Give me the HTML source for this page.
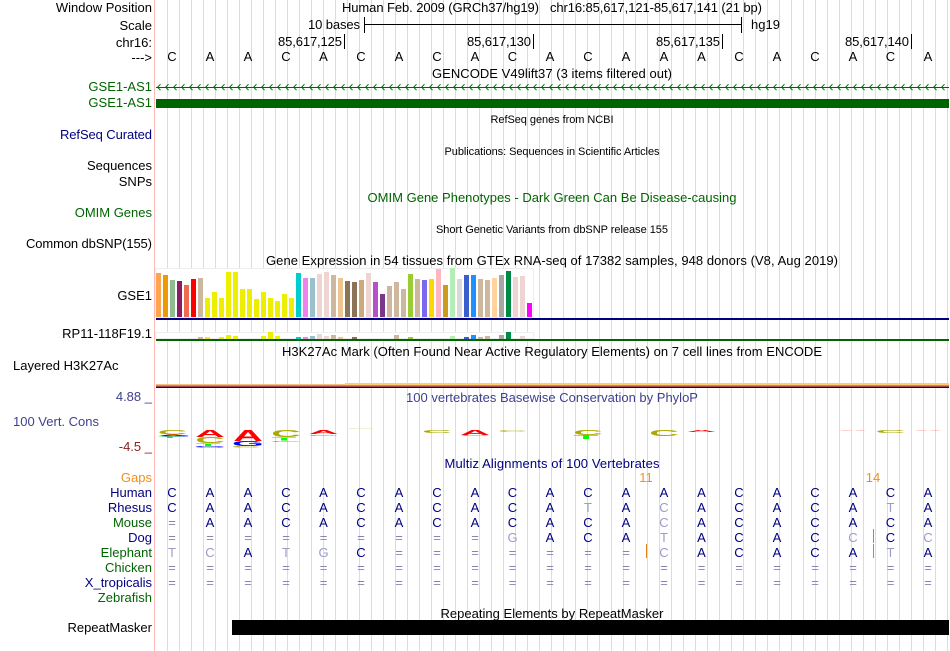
<!DOCTYPE html>
<html>
<head>
<meta charset="utf-8">
<title>Genome Browser</title>
<style>
html,body{margin:0;padding:0;background:#fff;width:950px;height:651px;overflow:hidden}
#gridbg{position:absolute;left:167px;top:0;width:783px;height:651px;background-image:linear-gradient(to right,#d9d9f5 1px,transparent 1px);background-size:12px 100%;background-repeat:repeat-x}
svg{display:block;position:absolute;left:0;top:0}
text{font-family:"Liberation Sans",sans-serif;font-size:13px;fill:#000}
.r{text-anchor:end}
.c{text-anchor:middle}
.s{font-size:11px}
.g{fill:#006400}
.n{fill:#000080}
.d{fill:#000080;text-anchor:middle}
.l{fill:#9c9cc8;text-anchor:middle}
.e{fill:#8484b8;text-anchor:middle}
.lg{font-weight:bold;font-size:41px;text-anchor:middle}
.A{fill:#ff0000}.C{fill:#aaaa00}.G{fill:#0000ff}.T{fill:#00ff00}
rect{shape-rendering:crispEdges}
</style>
</head>
<body>
<div id="gridbg"></div>
<svg width="950" height="651" viewBox="0 0 950 651" xmlns="http://www.w3.org/2000/svg">
<defs>
<pattern id="arr" patternUnits="userSpaceOnUse" x="157" y="83" width="8" height="9"><path d="M3.5 1.2L0.6 4.2L3.5 7.2" fill="none" stroke="#006400" stroke-width="1"/></pattern>
</defs>
<rect x="154" y="0" width="1" height="651" fill="#ffb8b8"/>

<!-- labels -->
<text class="r" x="152" y="12">Window Position</text>
<text class="r" x="152" y="30">Scale</text>
<text class="r" x="152" y="47">chr16:</text>
<text class="r" x="152" y="62">---&gt;</text>
<text class="r g" x="152" y="91">GSE1-AS1</text>
<text class="r g" x="152" y="107">GSE1-AS1</text>
<text class="r n" x="152" y="139" textLength="92">RefSeq Curated</text>
<text class="r" x="152" y="170">Sequences</text>
<text class="r" x="152" y="186">SNPs</text>
<text class="r g" x="152" y="217">OMIM Genes</text>
<text class="r" x="152" y="248" textLength="126">Common dbSNP(155)</text>
<text class="r" x="152" y="300">GSE1</text>
<text class="r" x="152" y="338">RP11-118F19.1</text>
<text x="13" y="370">Layered H3K27Ac</text>
<text class="r" x="152" y="401" style="fill:#40408f">4.88 _</text>
<text x="13" y="426" style="fill:#40408f">100 Vert. Cons</text>
<text class="r" x="152" y="451" style="fill:#8b2222">-4.5 _</text>
<text class="r" x="152" y="482" style="fill:#ee9020">Gaps</text>
<text class="r n" x="152" y="497">Human</text>
<text class="r n" x="152" y="512">Rhesus</text>
<text class="r g" x="152" y="527">Mouse</text>
<text class="r n" x="152" y="542">Dog</text>
<text class="r g" x="152" y="557">Elephant</text>
<text class="r g" x="152" y="572">Chicken</text>
<text class="r n" x="152" y="587">X_tropicalis</text>
<text class="r g" x="152" y="602">Zebrafish</text>
<text class="r" x="152" y="632">RepeatMasker</text>

<!-- header -->
<text x="342" y="12" textLength="197">Human Feb. 2009 (GRCh37/hg19)</text>
<text x="550" y="12" textLength="212">chr16:85,617,121-85,617,141 (21 bp)</text>
<text class="r" x="360" y="29" textLength="52">10 bases</text>
<text x="751" y="29">hg19</text>
<rect x="364" y="17" width="1" height="16" fill="#000"/>
<rect x="741" y="17" width="1" height="16" fill="#000"/>
<rect x="364" y="24" width="378" height="1" fill="#000"/>
<text class="r" x="342" y="46" textLength="64">85,617,125</text>
<text class="r" x="531" y="46" textLength="64">85,617,130</text>
<text class="r" x="720" y="46" textLength="64">85,617,135</text>
<text class="r" x="909" y="46" textLength="64">85,617,140</text>
<rect x="344" y="34" width="1" height="15" fill="#000"/>
<rect x="533" y="34" width="1" height="15" fill="#000"/>
<rect x="722" y="34" width="1" height="15" fill="#000"/>
<rect x="911" y="34" width="1" height="15" fill="#000"/>
<text class="c" x="0" y="61"><tspan x="172">C</tspan><tspan x="210">A</tspan><tspan x="248">A</tspan><tspan x="286">C</tspan><tspan x="323.5">A</tspan><tspan x="361">C</tspan><tspan x="399">A</tspan><tspan x="437">C</tspan><tspan x="475">A</tspan><tspan x="512.5">C</tspan><tspan x="550">A</tspan><tspan x="588">C</tspan><tspan x="626">A</tspan><tspan x="664">A</tspan><tspan x="701.5">A</tspan><tspan x="739">C</tspan><tspan x="777">A</tspan><tspan x="815">C</tspan><tspan x="853">A</tspan><tspan x="890.5">C</tspan><tspan x="928">A</tspan></text>

<!-- gene tracks -->
<text class="c" x="552" y="78" textLength="240">GENCODE V49lift37 (3 items filtered out)</text>
<rect x="156" y="87" width="793" height="1" fill="#006400"/>
<rect x="157" y="83" width="792" height="9" fill="url(#arr)"/>
<rect x="156" y="99" width="793" height="9" fill="#006400"/>
<text class="c s" x="552" y="123" textLength="123">RefSeq genes from NCBI</text>
<text class="c s" x="552" y="155" textLength="215">Publications: Sequences in Scientific Articles</text>
<text class="c g" x="552" y="202" textLength="369">OMIM Gene Phenotypes - Dark Green Can Be Disease-causing</text>
<text class="c s" x="552" y="233" textLength="232">Short Genetic Variants from dbSNP release 155</text>
<text class="c" x="552" y="265" textLength="572">Gene Expression in 54 tissues from GTEx RNA-seq of 17382 samples, 948 donors (V8, Aug 2019)</text>

<!-- GTEx GSE1 -->
<rect x="155.5" y="268.5" width="378" height="49" fill="#fff" stroke="#eeeeee"/>
<rect x="156" y="273" width="5" height="44" fill="#FFA54F"/>
<rect x="163" y="275" width="5" height="42" fill="#EE9A00"/>
<rect x="170" y="280" width="5" height="37" fill="#8FBC8F"/>
<rect x="177" y="281" width="5" height="36" fill="#8B1C62"/>
<rect x="184" y="285" width="5" height="32" fill="#EE6A50"/>
<rect x="191" y="279" width="5" height="38" fill="#FF0000"/>
<rect x="198" y="278" width="5" height="39" fill="#CDB79E"/>
<rect x="205" y="298" width="5" height="19" fill="#EEEE00"/>
<rect x="212" y="292" width="5" height="25" fill="#EEEE00"/>
<rect x="219" y="298" width="5" height="19" fill="#EEEE00"/>
<rect x="226" y="272" width="5" height="45" fill="#EEEE00"/>
<rect x="233" y="272" width="5" height="45" fill="#EEEE00"/>
<rect x="240" y="289" width="5" height="28" fill="#EEEE00"/>
<rect x="247" y="289" width="5" height="28" fill="#EEEE00"/>
<rect x="254" y="299" width="5" height="18" fill="#EEEE00"/>
<rect x="261" y="292" width="5" height="25" fill="#EEEE00"/>
<rect x="268" y="298" width="5" height="19" fill="#EEEE00"/>
<rect x="275" y="301" width="5" height="16" fill="#EEEE00"/>
<rect x="282" y="294" width="5" height="23" fill="#EEEE00"/>
<rect x="289" y="298" width="5" height="19" fill="#EEEE00"/>
<rect x="296" y="273" width="5" height="44" fill="#00CDCD"/>
<rect x="303" y="278" width="5" height="39" fill="#EE82EE"/>
<rect x="310" y="278" width="5" height="39" fill="#9AC0CD"/>
<rect x="317" y="274" width="5" height="43" fill="#EED5D2"/>
<rect x="324" y="272" width="5" height="45" fill="#EED5D2"/>
<rect x="331" y="275" width="5" height="42" fill="#CDB79E"/>
<rect x="338" y="278" width="5" height="39" fill="#EEC591"/>
<rect x="345" y="281" width="5" height="36" fill="#8B7355"/>
<rect x="352" y="282" width="5" height="35" fill="#8B7355"/>
<rect x="359" y="280" width="5" height="37" fill="#CDAA7D"/>
<rect x="366" y="273" width="5" height="44" fill="#EED5D2"/>
<rect x="373" y="282" width="5" height="35" fill="#B452CD"/>
<rect x="380" y="294" width="5" height="23" fill="#7A378B"/>
<rect x="387" y="286" width="5" height="31" fill="#CDB79E"/>
<rect x="394" y="282" width="5" height="35" fill="#CDB79E"/>
<rect x="401" y="289" width="5" height="28" fill="#CDB79E"/>
<rect x="408" y="274" width="5" height="43" fill="#9ACD32"/>
<rect x="415" y="279" width="5" height="38" fill="#CDB79E"/>
<rect x="422" y="280" width="5" height="37" fill="#7B68EE"/>
<rect x="429" y="279" width="5" height="38" fill="#FFD700"/>
<rect x="436" y="269" width="5" height="48" fill="#FFB6C1"/>
<rect x="443" y="285" width="5" height="32" fill="#CD9B1D"/>
<rect x="450" y="268" width="5" height="49" fill="#B4EEB4"/>
<rect x="457" y="279" width="5" height="38" fill="#D9D9D9"/>
<rect x="464" y="275" width="5" height="42" fill="#3A5FCD"/>
<rect x="471" y="275" width="5" height="42" fill="#1E90FF"/>
<rect x="478" y="279" width="5" height="38" fill="#CDB79E"/>
<rect x="485" y="280" width="5" height="37" fill="#CDB79E"/>
<rect x="492" y="278" width="5" height="39" fill="#FFD39B"/>
<rect x="499" y="275" width="5" height="42" fill="#A6A6A6"/>
<rect x="506" y="271" width="5" height="46" fill="#008B45"/>
<rect x="513" y="277" width="5" height="40" fill="#EED5D2"/>
<rect x="520" y="276" width="5" height="41" fill="#EED5D2"/>
<rect x="527" y="303" width="5" height="14" fill="#FF00FF"/>
<rect x="156" y="318" width="793" height="2" fill="#000080"/>

<!-- GTEx RP11 -->
<rect x="155.5" y="332.5" width="378" height="6" fill="#fff" stroke="#eeeeee"/>
<rect x="198" y="337" width="5" height="2" fill="#CDB79E"/>
<rect x="205" y="337" width="5" height="2" fill="#EEEE00"/>
<rect x="219" y="337" width="5" height="2" fill="#EEEE00"/>
<rect x="226" y="335" width="5" height="4" fill="#EEEE00"/>
<rect x="233" y="336" width="5" height="3" fill="#EEEE00"/>
<rect x="261" y="336" width="5" height="3" fill="#EEEE00"/>
<rect x="268" y="332" width="5" height="7" fill="#EEEE00"/>
<rect x="275" y="336" width="5" height="3" fill="#EEEE00"/>
<rect x="296" y="337" width="5" height="2" fill="#00CDCD"/>
<rect x="303" y="337" width="5" height="2" fill="#EE82EE"/>
<rect x="310" y="336" width="5" height="3" fill="#9AC0CD"/>
<rect x="317" y="334" width="5" height="5" fill="#EED5D2"/>
<rect x="324" y="336" width="5" height="3" fill="#EED5D2"/>
<rect x="331" y="335" width="5" height="4" fill="#CDB79E"/>
<rect x="338" y="337" width="5" height="2" fill="#EEC591"/>
<rect x="352" y="337" width="5" height="2" fill="#8B7355"/>
<rect x="394" y="335" width="5" height="4" fill="#CDB79E"/>
<rect x="408" y="337" width="5" height="2" fill="#9ACD32"/>
<rect x="450" y="336" width="5" height="3" fill="#B4EEB4"/>
<rect x="464" y="337" width="5" height="2" fill="#3A5FCD"/>
<rect x="471" y="335" width="5" height="4" fill="#1E90FF"/>
<rect x="478" y="337" width="5" height="2" fill="#CDB79E"/>
<rect x="485" y="336" width="5" height="3" fill="#CDB79E"/>
<rect x="499" y="335" width="5" height="4" fill="#A6A6A6"/>
<rect x="506" y="332" width="5" height="7" fill="#008B45"/>
<rect x="520" y="336" width="5" height="3" fill="#EED5D2"/>
<rect x="156" y="339" width="793" height="2" fill="#006400"/>

<!-- H3K27Ac -->
<text class="c" x="552" y="356" textLength="540">H3K27Ac Mark (Often Found Near Active Regulatory Elements) on 7 cell lines from ENCODE</text>
<rect x="345" y="383" width="604" height="2" fill="#ffcc66"/>
<rect x="156" y="384" width="189" height="1" fill="#f8c080"/>
<rect x="156" y="385" width="793" height="1" fill="#f4707a"/>
<rect x="156" y="386" width="793" height="1" fill="#a04858"/>
<rect x="156" y="387" width="793" height="1" fill="#101038"/>

<!-- PhyloP -->
<text class="c" x="552" y="402" style="fill:#40408f">100 vertebrates Basewise Conservation by PhyloP</text>
<g>
<text class="lg C" transform="translate(172.5 434.5) scale(1 0.16)">C</text>
<text class="lg A" transform="translate(172.5 436) scale(1 0.05)">A</text>
<text class="lg G" transform="translate(175 436.5) scale(1 0.04)">G</text>
<text class="lg T" transform="translate(170 438) scale(1 0.04)">T</text>

<text class="lg A" transform="translate(210 437) scale(1 0.25)">A</text>
<text class="lg C" transform="translate(210 443) scale(1 0.21)">C</text>
<text class="lg T" transform="translate(208 446.5) scale(1 0.12)">T</text>
<text class="lg G" transform="translate(210 447.5) scale(1 0.04)">G</text>

<text class="lg A" transform="translate(248 441) scale(1 0.39)">A</text>
<text class="lg G" transform="translate(248 446) scale(1 0.18)">G</text>
<text class="lg C" transform="translate(246 447.5) scale(1 0.05)">C</text>

<text class="lg C" transform="translate(286 437) scale(1 0.24)">C</text>
<text class="lg T" transform="translate(284 440.5) scale(1 0.12)">T</text>
<text class="lg G" transform="translate(286 441.5) scale(1 0.03)">G</text>

<text class="lg A" transform="translate(323.5 434) scale(1 0.13)">A</text>
<text class="lg G" transform="translate(323.5 435.5) scale(1 0.03)">G</text>

<text class="lg C" transform="translate(361 429) scale(1 0.03)" opacity=".6">C</text>
<text class="lg C" transform="translate(437 433) scale(1 0.1)">C</text>
<text class="lg A" transform="translate(475 435) scale(1 0.17)">A</text>
<text class="lg G" transform="translate(475 436) scale(1 0.03)">G</text>
<text class="lg C" transform="translate(512.5 432) scale(1 0.07)" opacity=".7">C</text>

<text class="lg C" transform="translate(588 435) scale(1 0.17)">C</text>
<text class="lg T" transform="translate(586 439) scale(1 0.13)">T</text>
<text class="lg C" transform="translate(664 436) scale(1 0.21)">C</text>
<text class="lg A" transform="translate(701.5 432) scale(1 0.07)">A</text>
<text class="lg A" transform="translate(853 431) scale(1 0.03)" opacity=".8">A</text>
<text class="lg C" transform="translate(890.5 433) scale(1 0.1)">C</text>
<text class="lg A" transform="translate(928 431) scale(1 0.03)" opacity=".8">A</text>
</g>

<!-- Multiz -->
<text class="c n" x="552" y="468" textLength="215">Multiz Alignments of 100 Vertebrates</text>
<text class="c" x="646" y="482" style="fill:#ee9020">11</text>
<text class="c" x="873" y="482" style="fill:#ee9020">14</text>
<rect x="646" y="544" width="1" height="14" fill="#e08010"/>
<rect x="873" y="529" width="1" height="14" fill="#e08010"/>
<rect x="873" y="544" width="1" height="14" fill="#e08010"/>

<!-- Human -->
<text class="d" y="497"><tspan x="172">C</tspan><tspan x="210">A</tspan><tspan x="248">A</tspan><tspan x="286">C</tspan><tspan x="323.5">A</tspan><tspan x="361">C</tspan><tspan x="399">A</tspan><tspan x="437">C</tspan><tspan x="475">A</tspan><tspan x="512.5">C</tspan><tspan x="550">A</tspan><tspan x="588">C</tspan><tspan x="626">A</tspan><tspan x="664">A</tspan><tspan x="701.5">A</tspan><tspan x="739">C</tspan><tspan x="777">A</tspan><tspan x="815">C</tspan><tspan x="853">A</tspan><tspan x="890.5">C</tspan><tspan x="928">A</tspan></text>
<!-- Rhesus -->
<text class="d" y="512"><tspan x="172">C</tspan><tspan x="210">A</tspan><tspan x="248">A</tspan><tspan x="286">C</tspan><tspan x="323.5">A</tspan><tspan x="361">C</tspan><tspan x="399">A</tspan><tspan x="437">C</tspan><tspan x="475">A</tspan><tspan x="512.5">C</tspan><tspan x="550">A</tspan><tspan x="626">A</tspan><tspan x="701.5">A</tspan><tspan x="739">C</tspan><tspan x="777">A</tspan><tspan x="815">C</tspan><tspan x="853">A</tspan><tspan x="928">A</tspan></text>
<text class="l" y="512"><tspan x="588">T</tspan><tspan x="664">C</tspan><tspan x="890.5">T</tspan></text>
<!-- Mouse -->
<text class="e" y="527"><tspan x="172">=</tspan></text>
<text class="d" y="527"><tspan x="210">A</tspan><tspan x="248">A</tspan><tspan x="286">C</tspan><tspan x="323.5">A</tspan><tspan x="361">C</tspan><tspan x="399">A</tspan><tspan x="437">C</tspan><tspan x="475">A</tspan><tspan x="512.5">C</tspan><tspan x="550">A</tspan><tspan x="588">C</tspan><tspan x="626">A</tspan><tspan x="701.5">A</tspan><tspan x="739">C</tspan><tspan x="777">A</tspan><tspan x="815">C</tspan><tspan x="853">A</tspan><tspan x="890.5">C</tspan><tspan x="928">A</tspan></text>
<text class="l" y="527"><tspan x="664">C</tspan></text>
<!-- Dog -->
<text class="e" y="542"><tspan x="172">=</tspan><tspan x="210">=</tspan><tspan x="248">=</tspan><tspan x="286">=</tspan><tspan x="323.5">=</tspan><tspan x="361">=</tspan><tspan x="399">=</tspan><tspan x="437">=</tspan><tspan x="475">=</tspan></text>
<text class="l" y="542"><tspan x="512.5">G</tspan><tspan x="664">T</tspan><tspan x="853">C</tspan><tspan x="928">C</tspan></text>
<text class="d" y="542"><tspan x="550">A</tspan><tspan x="588">C</tspan><tspan x="626">A</tspan><tspan x="701.5">A</tspan><tspan x="739">C</tspan><tspan x="777">A</tspan><tspan x="815">C</tspan><tspan x="890.5">C</tspan></text>
<!-- Elephant -->
<text class="l" y="557"><tspan x="172">T</tspan><tspan x="210">C</tspan><tspan x="286">T</tspan><tspan x="323.5">G</tspan><tspan x="664">C</tspan><tspan x="890.5">T</tspan></text>
<text class="d" y="557"><tspan x="248">A</tspan><tspan x="361">C</tspan><tspan x="701.5">A</tspan><tspan x="739">C</tspan><tspan x="777">A</tspan><tspan x="815">C</tspan><tspan x="853">A</tspan><tspan x="928">A</tspan></text>
<text class="e" y="557"><tspan x="399">=</tspan><tspan x="437">=</tspan><tspan x="475">=</tspan><tspan x="512.5">=</tspan><tspan x="550">=</tspan><tspan x="588">=</tspan><tspan x="626">=</tspan></text>
<!-- Chicken -->
<text class="e" y="572"><tspan x="172">=</tspan><tspan x="210">=</tspan><tspan x="248">=</tspan><tspan x="286">=</tspan><tspan x="323.5">=</tspan><tspan x="361">=</tspan><tspan x="399">=</tspan><tspan x="437">=</tspan><tspan x="475">=</tspan><tspan x="512.5">=</tspan><tspan x="550">=</tspan><tspan x="588">=</tspan><tspan x="626">=</tspan><tspan x="664">=</tspan><tspan x="701.5">=</tspan><tspan x="739">=</tspan><tspan x="777">=</tspan><tspan x="815">=</tspan><tspan x="853">=</tspan><tspan x="890.5">=</tspan><tspan x="928">=</tspan></text>
<!-- X_tropicalis -->
<text class="e" y="587"><tspan x="172">=</tspan><tspan x="210">=</tspan><tspan x="248">=</tspan><tspan x="286">=</tspan><tspan x="323.5">=</tspan><tspan x="361">=</tspan><tspan x="399">=</tspan><tspan x="437">=</tspan><tspan x="475">=</tspan><tspan x="512.5">=</tspan><tspan x="550">=</tspan><tspan x="588">=</tspan><tspan x="626">=</tspan><tspan x="664">=</tspan><tspan x="701.5">=</tspan><tspan x="739">=</tspan><tspan x="777">=</tspan><tspan x="815">=</tspan><tspan x="853">=</tspan><tspan x="890.5">=</tspan><tspan x="928">=</tspan></text>

<!-- RepeatMasker -->
<text class="c" x="552" y="618" textLength="223">Repeating Elements by RepeatMasker</text>
<rect x="232" y="620" width="717" height="15" fill="#000"/>
</svg>
</body>
</html>
